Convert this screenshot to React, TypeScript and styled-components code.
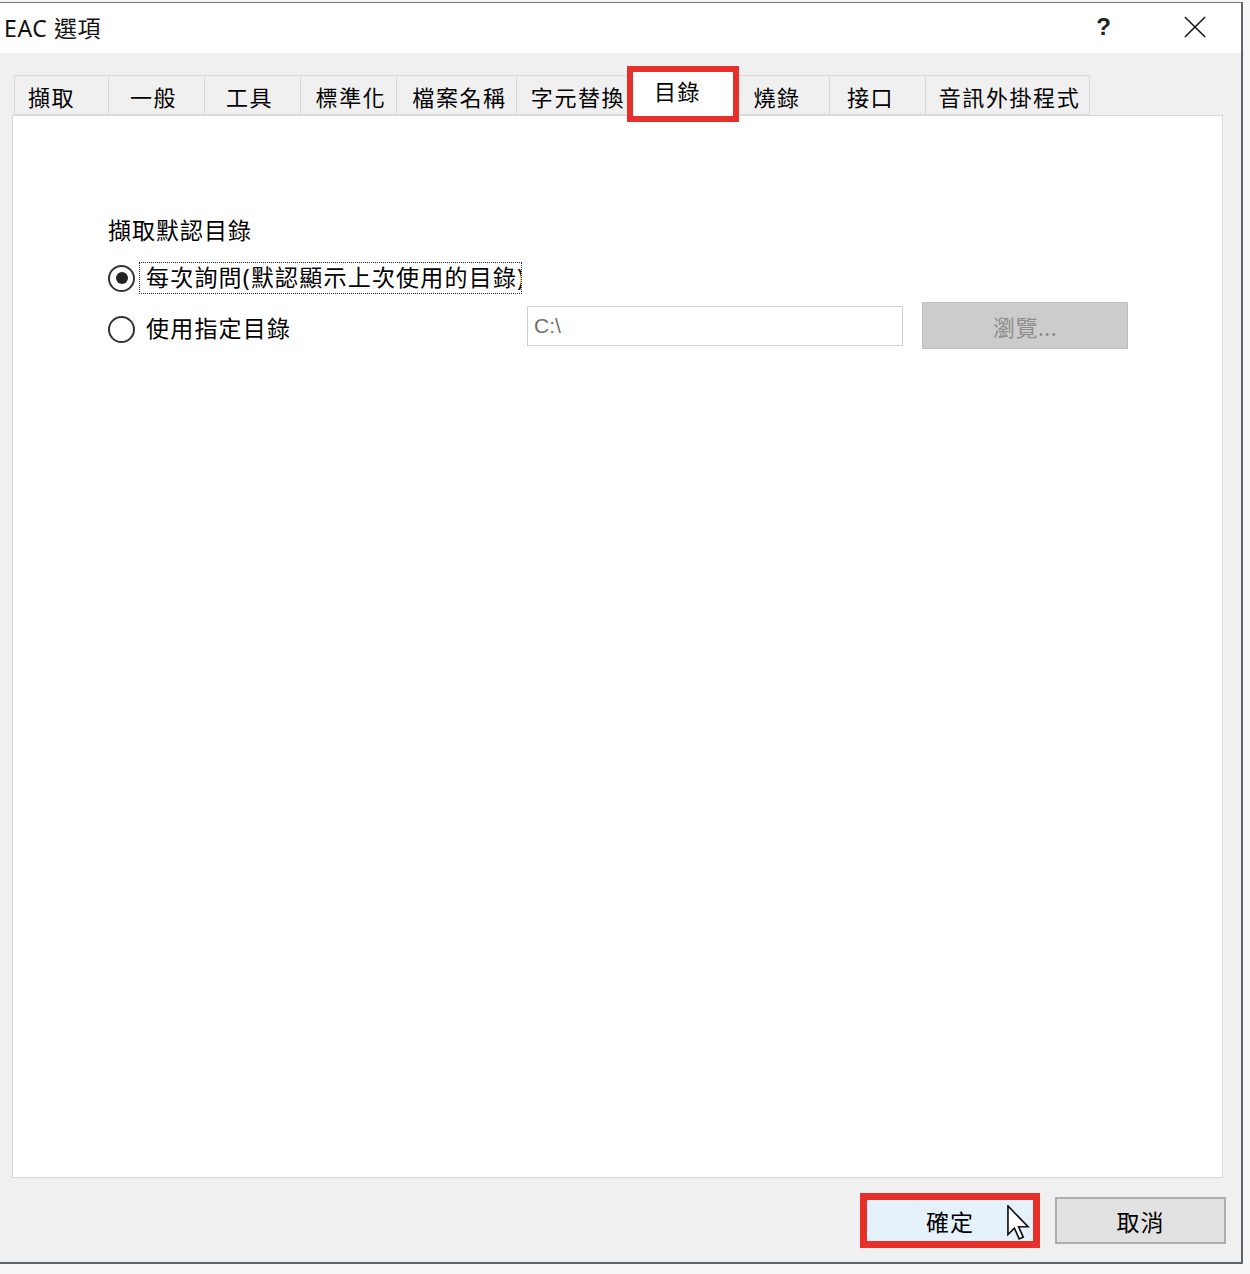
import styled, { createGlobalStyle } from 'styled-components';

const GlobalStyle = createGlobalStyle`
  html, body {
    margin: 0;
    padding: 0;
    background: #f6f6f6;
  }
  *, *::before, *::after {
    box-sizing: border-box;
  }
`;

const FONT = `"Noto Sans", "Noto Sans CJK TC", sans-serif`;

// shift > 0 moves the label left, < 0 moves it right
const tabs = [
  { label: '擷取', width: 95, shift: 20 },
  { label: '一般', width: 96, shift: 6 },
  { label: '工具', width: 96, shift: 6 },
  { label: '標準化', width: 96, shift: -5 },
  { label: '檔案名稱', width: 120, shift: -6 },
  { label: '字元替換', width: 113, shift: -10 },
  { label: '目錄', width: 105, shift: 10, active: true },
  { label: '燒錄', width: 95, shift: 10 },
  { label: '接口', width: 96, shift: 14 },
  { label: '音訊外掛程式', width: 164, shift: -4 },
];

const App = () => {
  return (
    <>
      <GlobalStyle />
      <Window>
        <TitleBar>
          <Title>EAC 選項</Title>
          <TitleButtons>
            <Help>?</Help>
            <CloseIcon viewBox="0 0 24 24">
              <path d="M1 1 L23 23 M23 1 L1 23" stroke="#111" strokeWidth="1.6" fill="none" />
            </CloseIcon>
          </TitleButtons>
        </TitleBar>

        <Body>
          <TabRow>
            {tabs.map((t) => (
              <Tab key={t.label} $width={t.width} $shift={t.shift} $active={!!t.active}>
                {t.label}
              </Tab>
            ))}
          </TabRow>

          <Panel>
            <Heading>擷取默認目錄</Heading>
            <OptionRow>
              <Radio $checked />
              <RadioLabel $focused>每次詢問(默認顯示上次使用的目錄)</RadioLabel>
            </OptionRow>
            <PathRow>
              <PathOption>
                <Radio />
                <RadioLabel>使用指定目錄</RadioLabel>
              </PathOption>
              <PathInput>C:\</PathInput>
              <BrowseButton>瀏覽...</BrowseButton>
            </PathRow>
          </Panel>

          <Footer>
            <OkButton>
              確定
              <Cursor viewBox="0 0 13 19">
                <path
                  d="M0.5 0.5 L0.5 16 L4 12.6 L6.6 18.4 L8.8 17.4 L6.3 11.8 L11.4 11.8 Z"
                  fill="#fff"
                  stroke="#111"
                  strokeWidth="0.9"
                  strokeLinejoin="miter"
                />
              </Cursor>
            </OkButton>
            <Button>取消</Button>
          </Footer>
        </Body>
      </Window>
    </>
  );
};

export default App;

const Window = styled.div`
  width: 1243px;
  margin-top: 2px;
  border-top: 1px solid #6f7479;
  border-right: 2px solid #5c646c;
  border-bottom: 2px solid #5c646c;
  background: #f0f0f0;
  font-family: ${FONT};
`;

const TitleBar = styled.div`
  height: 50px;
  background: #fff;
  display: flex;
  align-items: center;
  justify-content: space-between;
  padding: 0 35px 2px 4px;
`;

const Title = styled.div`
  font-size: 23px;
  color: #111;
  letter-spacing: 0.6px;
`;

const TitleButtons = styled.div`
  display: flex;
  align-items: center;
  gap: 73px;
`;

const Help = styled.span`
  font-family: "Liberation Sans", sans-serif;
  font-size: 24px;
  font-weight: bold;
  color: #222;
`;

const CloseIcon = styled.svg`
  width: 22px;
  height: 22px;
`;

const Body = styled.div`
  padding-top: 15px;
`;

const TabRow = styled.div`
  height: 47px;
  display: flex;
  align-items: flex-end;
  padding-left: 14px;
  position: relative;
  z-index: 1;
`;

const Tab = styled.div<{ $width: number; $shift: number; $active: boolean }>`
  position: relative;
  flex: none;
  width: ${(p) => (p.$active ? p.$width + 4 : p.$width)}px;
  height: ${(p) => (p.$active ? 50 : 40)}px;
  margin: ${(p) => (p.$active ? '0 -2px -3px -2px' : '0')};
  z-index: ${(p) => (p.$active ? 2 : 0)};
  background: ${(p) => (p.$active ? '#fff' : '#f0f0f0')};
  border-top: 1px solid #d9d9d9;
  border-right: 1px solid #d9d9d9;
  border-left: ${(p) => (p.$active ? '1px solid #d9d9d9' : 'none')};
  border-bottom: ${(p) => (p.$active ? 'none' : '1px solid #d9d9d9')};
  display: flex;
  justify-content: center;
  align-items: ${(p) => (p.$active ? 'flex-start' : 'center')};
  padding-top: ${(p) => (p.$active ? '5px' : '1px')};
  padding-right: ${(p) => Math.max(p.$shift, 0)}px;
  padding-left: ${(p) => Math.max(-p.$shift, 0)}px;
  font-size: 22px;
  letter-spacing: 1.6px;
  color: #000;
  white-space: nowrap;
  overflow: hidden;

  &:first-child {
    border-left: 1px solid #d9d9d9;
  }

  ${(p) =>
    p.$active &&
    `
    overflow: visible;
    &::after {
      content: '';
      position: absolute;
      left: -2px;
      top: -3px;
      width: 112px;
      height: 56px;
      border: 6px solid #e8302a;
    }
  `}
`;

const Panel = styled.div`
  margin-left: 12px;
  width: 1211px;
  height: 1063px;
  background: #fff;
  border: 1px solid #d9d9d9;
  padding: 99px 0 0 95px;
`;

const Heading = styled.div`
  font-size: 23px;
  letter-spacing: 1px;
  line-height: 30px;
  color: #000;
`;

const OptionRow = styled.div`
  display: flex;
  align-items: center;
  height: 32px;
  margin-top: 17px;
`;

const Radio = styled.span<{ $checked?: boolean }>`
  position: relative;
  flex: none;
  width: 27px;
  height: 27px;
  border-radius: 50%;
  border: 2px solid #333;
  background: #fff;

  ${(p) =>
    p.$checked &&
    `
    &::after {
      content: '';
      position: absolute;
      left: 5.5px;
      top: 5.5px;
      width: 12px;
      height: 12px;
      border-radius: 50%;
      background: #222;
    }
  `}
`;

const RadioLabel = styled.span<{ $focused?: boolean }>`
  margin-left: 4px;
  width: 383px;
  height: 32px;
  line-height: 29px;
  padding-left: 6px;
  border: 1px dotted ${(p) => (p.$focused ? '#222' : 'transparent')};
  font-size: 23px;
  letter-spacing: 1.2px;
  color: #000;
  white-space: nowrap;
  overflow: hidden;
`;

const PathRow = styled.div`
  display: flex;
  align-items: center;
  height: 47px;
  margin-top: 8px;
`;

const PathOption = styled.div`
  display: flex;
  align-items: center;
  width: 419px;
  margin-top: 7px;
`;

const PathInput = styled.div`
  width: 376px;
  height: 40px;
  border: 1px solid #cfcfcf;
  background: #fff;
  padding-left: 6px;
  display: flex;
  align-items: center;
  font-family: "Liberation Sans", sans-serif;
  font-size: 21px;
  color: #707070;
`;

const BrowseButton = styled.div`
  margin-left: 19px;
  width: 206px;
  height: 47px;
  background: #cccccc;
  border: 1px solid #bfbfbf;
  display: flex;
  align-items: center;
  justify-content: center;
  font-size: 22px;
  color: #8d8d8d;
  letter-spacing: 0.5px;
`;

const Footer = styled.div`
  height: 84px;
  display: flex;
  justify-content: flex-end;
  align-items: flex-start;
  gap: 19px;
  padding: 19px 15px 0 0;
`;

const Button = styled.div`
  width: 171px;
  height: 47px;
  background: #e1e1e1;
  border: 2px solid #adadad;
  display: flex;
  align-items: center;
  justify-content: center;
  font-size: 23px;
  letter-spacing: 1px;
  color: #000;
`;

const OkButton = styled(Button)`
  position: relative;
  width: 172px;
  background: #e5f1fb;
  border-color: #0078d7;

  &::after {
    content: '';
    position: absolute;
    left: -6px;
    top: -6px;
    right: -6px;
    bottom: -6px;
    border: 7px solid #e8302a;
  }
`;

const Cursor = styled.svg`
  position: absolute;
  left: 141px;
  top: 6px;
  width: 24px;
  height: 35px;
  z-index: 1;
`;
